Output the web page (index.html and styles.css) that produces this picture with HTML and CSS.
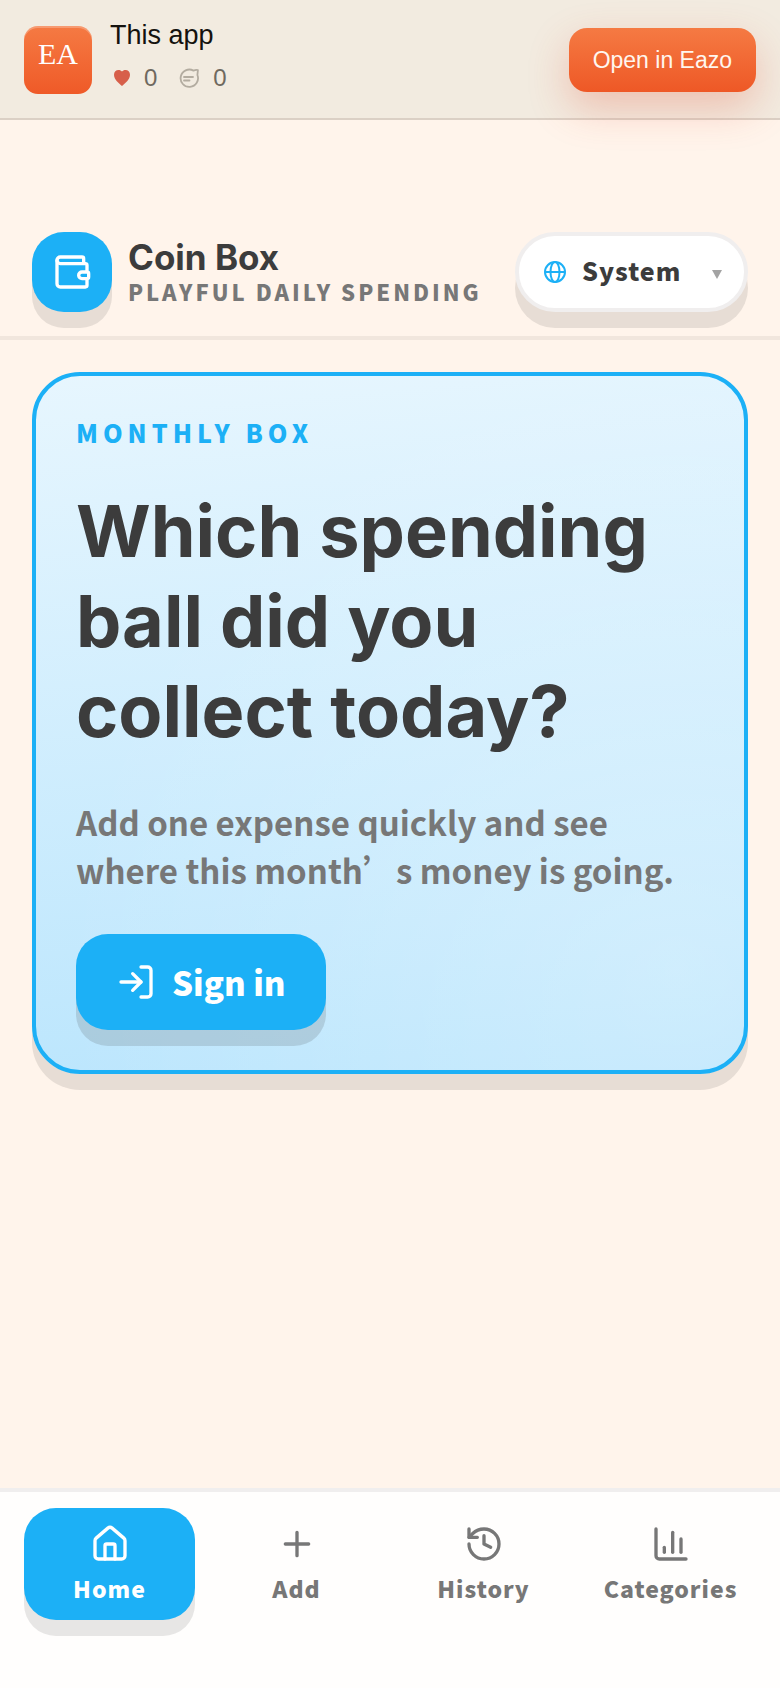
FILE: index.html
```html
<!DOCTYPE html>
<html lang="en">
<head>
    <meta charset="UTF-8">
    <meta name="viewport" content="width=device-width, initial-scale=1.0">
    <title>Coin Box</title>
    <link rel="stylesheet" href="styles.css">
</head>
<body>

    <div class="app-bar">
        <div class="app-logo">EA</div>
        <div class="app-info">
            <div class="app-name">This app</div>
            <div class="app-stats">
                <span class="stat">
                    <svg class="heart" viewBox="0 0 16 16" aria-hidden="true"><path d="M8 16C5 13.500 0 9.500 0 4.800C0 2 2 0 4.500 0C6 0 7.300.700 8 1.600C8.700.700 10 0 11.500 0C14 0 16 2 16 4.800C16 9.500 11 13.500 8 16Z"/></svg>
                    0
                </span>
                <span class="stat">
                    <svg class="comment" viewBox="0 0 20 20" aria-hidden="true"><path d="M14.500 2.600A8.700 8.700 0 1 0 18.400 7L18.900 2.200C17.500 1.700 16 2 14.500 2.600"/><path d="M5 9h9M5 12.500h5.500"/></svg>
                    0
                </span>
            </div>
        </div>
        <a class="open-link" href="#">Open in Eazo</a>
    </div>

    <header class="header">
        <div class="brand-icon">
            <svg class="icon" viewBox="0 0 24 24" aria-hidden="true"><path d="M19 7V4a1 1 0 0 0-1-1H5a2 2 0 0 0 0 4h15a1 1 0 0 1 1 1v4h-3a2 2 0 0 0 0 4h3a1 1 0 0 0 1-1v-2a1 1 0 0 0-1-1"/><path d="M3 5v14a2 2 0 0 0 2 2h15a1 1 0 0 0 1-1v-4"/></svg>
        </div>
        <div class="brand-text">
            <div class="brand-name">Coin Box</div>
            <div class="brand-sub">PLAYFUL DAILY SPENDING</div>
        </div>
        <label class="language">
            <svg class="globe" viewBox="0 0 24 24" aria-hidden="true"><circle cx="12" cy="12" r="10"/><ellipse cx="12" cy="12" rx="4.500" ry="10"/><path d="M2 12h20"/></svg>
            <select aria-label="Language">
                <option>System</option>
            </select>
            <span class="caret"></span>
        </label>
    </header>

    <main class="content">
        <section class="card">
            <div class="eyebrow">MONTHLY BOX</div>
            <h1>Which spending ball did you collect today?</h1>
            <p>Add one expense quickly and see where this month’s money is going.</p>
            <button class="sign-in" type="button">
                <svg class="icon" viewBox="0 0 24 24" aria-hidden="true"><path d="M15 3h4a2 2 0 0 1 2 2v14a2 2 0 0 1-2 2h-4"/><path d="M10 17l5-5-5-5"/><path d="M15 12H3"/></svg>
                Sign in
            </button>
        </section>
    </main>

    <nav class="tabs">
        <a class="tab active" href="#home">
            <svg class="icon" viewBox="0 0 24 24" aria-hidden="true"><path d="M15 21v-8a1 1 0 0 0-1-1h-4a1 1 0 0 0-1 1v8"/><path d="M3 10a2 2 0 0 1 .709-1.528l7-6a2 2 0 0 1 2.582 0l7 6A2 2 0 0 1 21 10v9a2 2 0 0 1-2 2H5a2 2 0 0 1-2-2z"/></svg>
            Home
        </a>
        <a class="tab" href="#add">
            <svg class="icon" viewBox="0 0 24 24" aria-hidden="true"><path d="M5 12h14M12 5v14"/></svg>
            Add
        </a>
        <a class="tab" href="#history">
            <svg class="icon" viewBox="0 0 24 24" aria-hidden="true"><path d="M3 12a9 9 0 1 0 9-9 9.750 9.750 0 0 0-6.740 2.740L3 8"/><path d="M3 3v5h5"/><path d="M12 7v5l4 2"/></svg>
            History
        </a>
        <a class="tab" href="#categories">
            <svg class="icon" viewBox="0 0 24 24" aria-hidden="true"><path d="M3 3v16a2 2 0 0 0 2 2h16"/><path d="M18 17V9"/><path d="M13 17V5"/><path d="M8 17v-3"/></svg>
            Categories
        </a>
    </nav>

</body>
</html>
```
FILE: styles.css
```css
* {
    box-sizing: border-box;
}
body {
    margin: 0;
    min-height: 100vh;
    display: flex;
    flex-direction: column;
    background: #fff4eb;
    color: #3c3c3c;
    font-family: "Noto Sans CJK SC", "Noto Sans", sans-serif;
}
a {
    text-decoration: none;
}
.icon {
    width: 40px;
    height: 40px;
    flex: none;
    fill: none;
    stroke: currentColor;
    stroke-width: 2;
    stroke-linecap: round;
    stroke-linejoin: round;
}

/* top bar */
.app-bar {
    display: flex;
    align-items: center;
    gap: 18px;
    height: 120px;
    padding: 2px 24px 0;
    background: #f2ebe0;
    border-bottom: 2px solid #dbd0c5;
    font-family: "Liberation Sans", Arial, sans-serif;
}
.app-logo {
    width: 68px;
    height: 68px;
    padding-top: 10px;
    border-radius: 14px;
    background: linear-gradient(#f57a43, #ef5a28);
    box-shadow: inset 0 2px 0 rgba(255, 255, 255, 0.25);
    color: #fff;
    font-family: "Liberation Serif", serif;
    font-size: 30px;
    line-height: 36px;
    text-align: center;
}
.app-info {
    flex: 1;
    height: 84px;
}
.app-name {
    color: #15120e;
    font-size: 27px;
    line-height: 34px;
}
.app-stats {
    display: flex;
    gap: 22px;
    padding-top: 10px;
    padding-left: 4px;
}
.stat {
    display: flex;
    align-items: center;
    gap: 14px;
    color: #6f695f;
    font-size: 24px;
    line-height: 32px;
}
.heart {
    width: 16px;
    height: 16px;
    fill: #d75f4a;
}
.comment {
    width: 20px;
    height: 20px;
    fill: none;
    stroke: #b3aca0;
    stroke-width: 1.8;
    stroke-linecap: round;
    stroke-linejoin: round;
}
.open-link {
    padding: 0 24px;
    border-radius: 18px;
    background: linear-gradient(#f57a43, #ee5826);
    box-shadow: 0 16px 40px rgba(226, 80, 50, 0.28);
    color: #fff6ee;
    font-size: 23px;
    line-height: 64px;
}

/* header */
.header {
    display: flex;
    align-items: center;
    gap: 16px;
    padding: 112px 32px 24px;
    border-bottom: 4px solid #f1e6dd;
}
.brand-icon {
    display: flex;
    align-items: center;
    justify-content: center;
    width: 80px;
    height: 80px;
    border-radius: 32px;
    background: #1cb0f6;
    box-shadow: 0 16px 0 rgba(60, 60, 60, 0.12);
    color: #fff;
}
.brand-text {
    flex: 1;
    padding-bottom: 2px;
    white-space: nowrap;
}
.brand-name {
    font-family: Inter, sans-serif;
    font-size: 35px;
    font-weight: 700;
    line-height: 40px;
}
.brand-sub {
    color: #777;
    font-size: 22px;
    font-weight: 900;
    letter-spacing: 3px;
    line-height: 28px;
}
.language {
    display: flex;
    align-items: center;
    width: 233px;
    height: 80px;
    padding: 0 22px 0 24px;
    border: 4px solid #f0eeee;
    border-radius: 40px;
    background: #fff;
    box-shadow: 0 16px 0 rgba(60, 60, 60, 0.12);
}
.globe {
    width: 24px;
    height: 24px;
    fill: none;
    stroke: #1cb0f6;
    stroke-width: 2;
}
.language select {
    flex: 1;
    min-width: 0;
    padding: 0 0 4px 15px;
    border: 0;
    background: none;
    appearance: none;
    color: #3c3c3c;
    font-family: inherit;
    font-size: 25px;
    font-weight: 900;
    letter-spacing: 1px;
}
.caret {
    margin-top: 4px;
    border: 5px solid transparent;
    border-top: 9px solid #a3a3a3;
    border-bottom: 0;
}

/* hero card */
.content {
    flex: 1;
    padding: 32px;
}
.card {
    padding: 40px;
    border: 4px solid #1cb0f6;
    border-radius: 48px;
    background:
        radial-gradient(circle at 90% 85%, rgba(255, 255, 255, 0.25), transparent 70%) border-box,
        linear-gradient(175deg, #e7f6fe, #b9e5fd) border-box;
    box-shadow: 0 16px 0 rgba(60, 60, 60, 0.12);
}
.eyebrow {
    color: #1cb0f6;
    font-size: 25px;
    font-weight: 900;
    letter-spacing: 5px;
    line-height: 32px;
}
h1 {
    margin: 38px 0 42px;
    font-family: Inter, sans-serif;
    font-size: 72px;
    font-weight: 700;
    line-height: 90px;
}
p {
    margin: 0 0 40px;
    color: #777;
    font-size: 33px;
    font-weight: 700;
    line-height: 48px;
}
.sign-in {
    display: flex;
    align-items: center;
    gap: 16px;
    height: 96px;
    padding: 0 40px;
    border: 0;
    border-radius: 32px;
    background: #1cb0f6;
    box-shadow: 0 16px 0 rgba(60, 60, 60, 0.16);
    color: #fff;
    font-family: inherit;
    font-size: 33px;
    font-weight: 900;
    cursor: pointer;
}

/* bottom tabs */
.tabs {
    display: grid;
    grid-template-columns: repeat(4, 1fr);
    gap: 16px;
    padding: 16px 24px 68px;
    border-top: 4px solid #f0eeee;
    background: #fffefd;
}
.tab {
    display: flex;
    flex-direction: column;
    align-items: center;
    gap: 8px;
    height: 112px;
    padding-top: 16px;
    border-radius: 32px;
    color: #777;
    font-size: 23px;
    font-weight: 900;
    letter-spacing: 1px;
    line-height: 32px;
}
.tab.active {
    background: #1cb0f6;
    box-shadow: 0 16px 0 rgba(60, 60, 60, 0.12);
    color: #fff;
}
```
